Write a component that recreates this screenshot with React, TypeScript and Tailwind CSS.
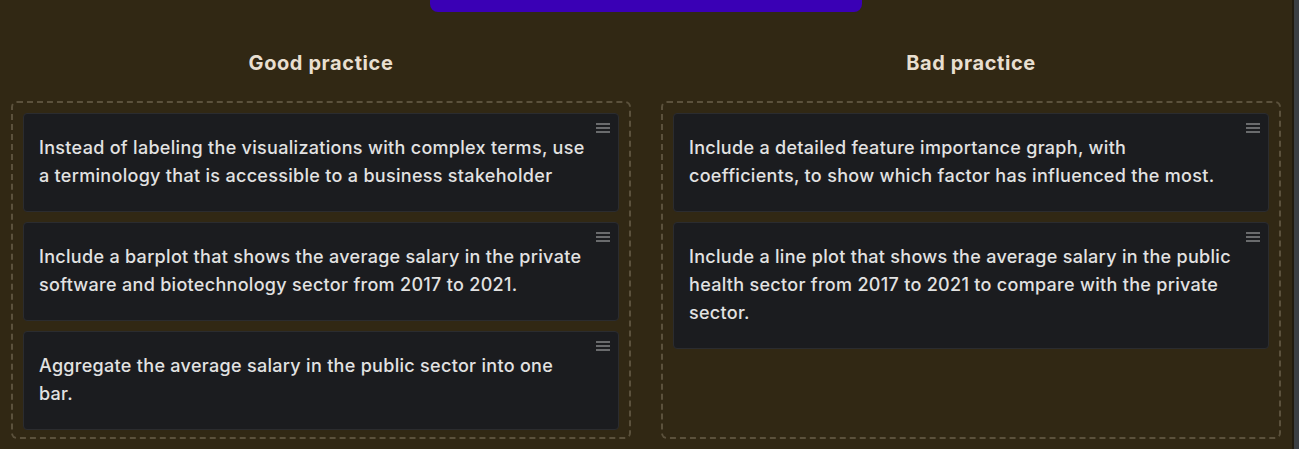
import React from "react";

const good = [
  [
    "Instead of labeling the visualizations with complex terms, use",
    "a terminology that is accessible to a business stakeholder",
  ],
  [
    "Include a barplot that shows the average salary in the private",
    "software and biotechnology sector from 2017 to 2021.",
  ],
  ["Aggregate the average salary in the public sector into one", "bar."],
];

const bad = [
  [
    "Include a detailed feature importance graph, with",
    "coefficients, to show which factor has influenced the most.",
  ],
  [
    "Include a line plot that shows the average salary in the public",
    "health sector from 2017 to 2021 to compare with the private",
    "sector.",
  ],
];

function Handle() {
  return (
    <div className="absolute top-[9px] right-[8px] flex flex-col gap-[2px]">
      <span className="block h-[2px] w-[14px] bg-[#6a6b6d]" />
      <span className="block h-[2px] w-[14px] bg-[#6a6b6d]" />
      <span className="block h-[2px] w-[14px] bg-[#6a6b6d]" />
    </div>
  );
}

function Card({ lines }: { lines: string[] }) {
  return (
    <div className="relative rounded-[4px] border border-[#2b2c2f] bg-[#1b1c1f] pl-[15px] pr-[20px] pt-5 pb-[21px]">
      <Handle />
      <p className="whitespace-nowrap text-[18px] font-medium leading-[28px] tracking-[0.3px] text-[#e2e2e2]">
        {lines.map((l, i) => (
          <React.Fragment key={i}>
            {i > 0 && <br />}
            {l}
          </React.Fragment>
        ))}
      </p>
    </div>
  );
}

function Column({ title, items }: { title: string; items: string[][] }) {
  return (
    <div className="flex flex-1 flex-col">
      <h2 className="text-center text-[20px] font-bold leading-[28px] tracking-[0.6px] text-[#e8dfd0]">
        {title}
      </h2>
      <div className="mt-6 flex h-[338px] flex-col gap-[10px] rounded-[6px] border-2 border-dashed border-[#5b513c] p-[10px]">
        {items.map((t) => (
          <Card key={t[0]} lines={t} />
        ))}
      </div>
    </div>
  );
}

export default function App() {
  return (
    <div
      className="flex h-[449px] w-full overflow-hidden bg-[#312814]"
      style={{ fontFamily: "Inter, 'Noto Sans', sans-serif" }}
    >
      <div className="flex flex-1 flex-col items-center">
        <div className="h-3 w-[432px] rounded-b-[8px] bg-[#3a00b5]" />
        <div className="mt-[37px] flex w-full gap-[30px] px-[11px]">
          <Column title="Good practice" items={good} />
          <Column title="Bad practice" items={bad} />
        </div>
      </div>
      <div className="w-[7px] border-l-2 border-[#211b0e] bg-[#3b3f43]" />
    </div>
  );
}
